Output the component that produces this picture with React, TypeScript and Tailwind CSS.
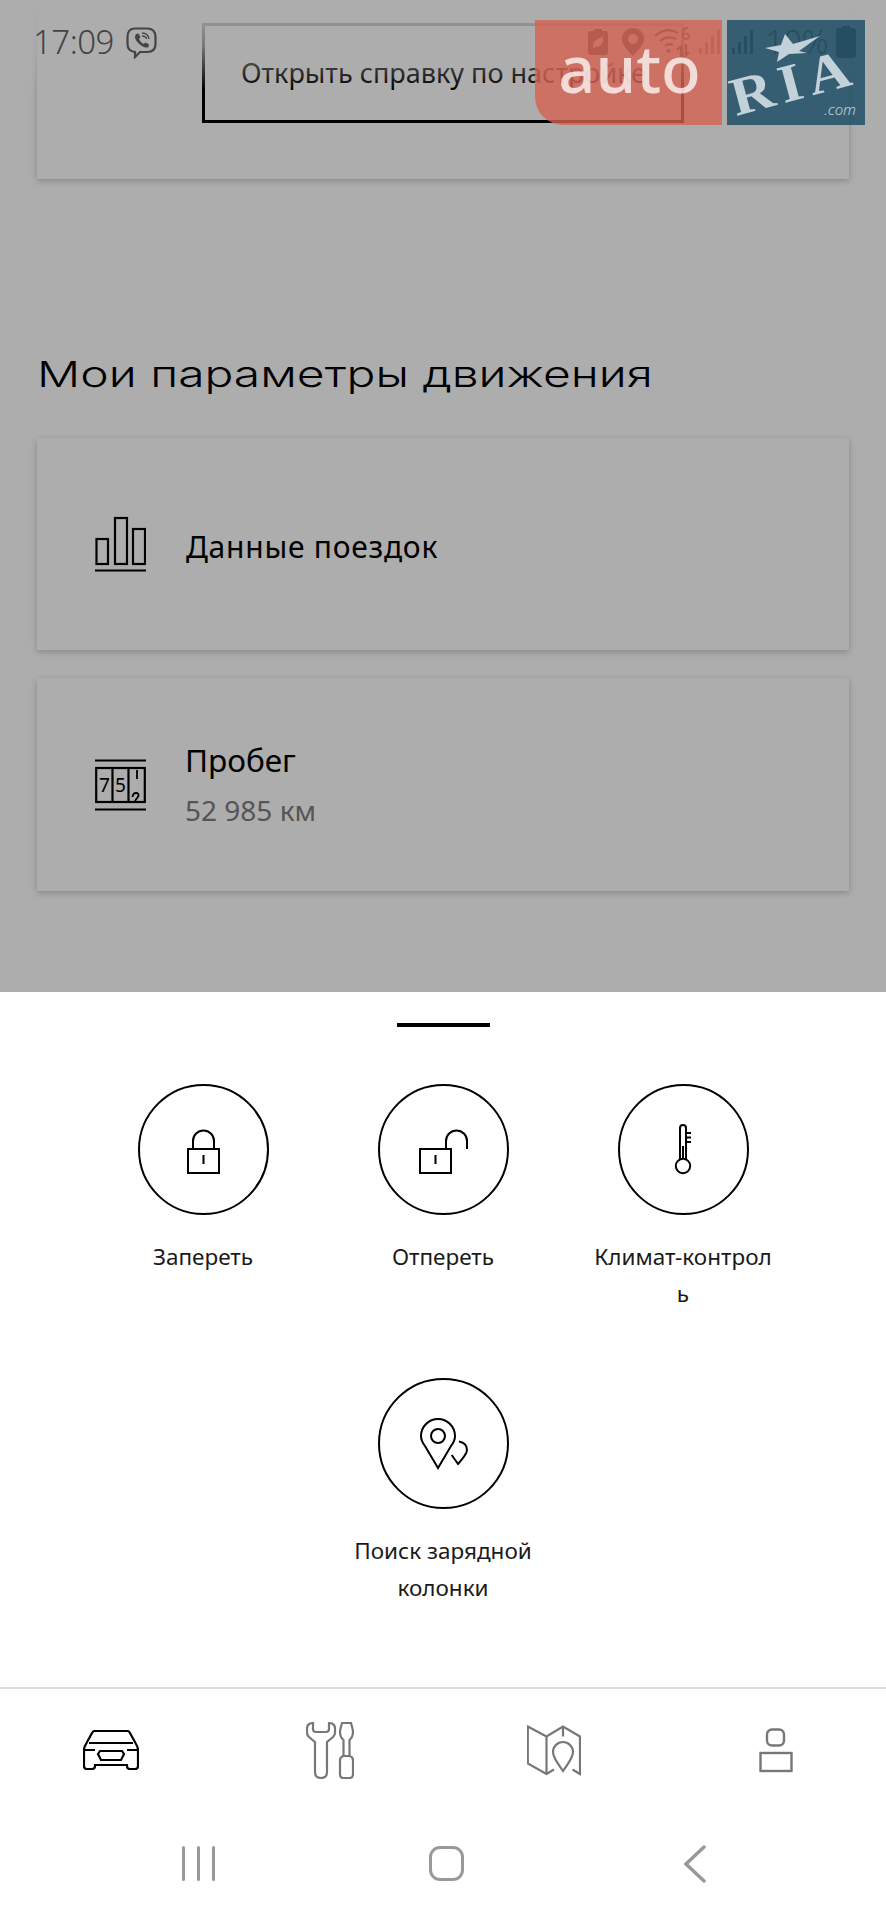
import React from "react";

const sans = "font-['Noto_Sans',sans-serif]";

function Action({ label, className = "", labelClass = "break-words", children }: { label: string; className?: string; labelClass?: string; children: React.ReactNode }) {
  return (
    <div className={`flex flex-col items-center ${className}`}>
      <div className="w-[131px] h-[131px] rounded-full border-[2.5px] border-black box-border flex items-center justify-center">
        <svg width="131" height="131" viewBox="0 0 131 131" fill="none" stroke="#000" strokeWidth="2" className="shrink-0">
          {children}
        </svg>
      </div>
      <div className={`mt-[23px] w-[182px] text-center text-[22.5px] leading-[37px] text-[#1a1a1a] ${labelClass}`}>{label}</div>
    </div>
  );
}

function Card({ className = "", children }: { className?: string; children: React.ReactNode }) {
  return <div className={`bg-[#adadad] shadow-[0_2px_6px_rgba(0,0,0,0.22)] ${className}`}>{children}</div>;
}

function Signal({ className = "" }: { className?: string }) {
  return (
    <svg width="22" height="24" viewBox="0 0 22 24" fill="#444444" className={className}>
      <rect x="0" y="18" width="3" height="6" />
      <rect x="6" y="12" width="3" height="12" />
      <rect x="12" y="6" width="3" height="18" />
      <rect x="18" y="0" width="3" height="24" />
    </svg>
  );
}

export default function App() {
  return (
    <div className={`relative w-[886px] h-[1920px] overflow-hidden bg-white ${sans}`}>
      {/* dimmed page */}
      <div className="h-[992px] bg-[#adadad] px-[37px]">
        <Card className="h-[179px] pt-[23px] flex justify-center items-start">
          <div className="w-[482px] h-[100px] border-[3px] border-black flex items-center pl-[36px] text-[27px] text-black whitespace-nowrap">
            Открыть справку по настройке
          </div>
        </Card>
        <div className="mt-[171px] h-[48px] leading-[48px] text-[36px] font-light font-['Inter',sans-serif] text-black whitespace-nowrap origin-left scale-x-[1.333]">
          Мои параметры движения
        </div>
        <Card className="mt-[40px] h-[212px] flex items-center pl-[58px] gap-[40px]">
          <svg width="51" height="56" viewBox="0 0 51 56" fill="none" stroke="#000" strokeWidth="2.2" className="shrink-0">
            <rect x="1.5" y="23" width="11.5" height="25" />
            <rect x="20" y="2" width="12" height="46" />
            <rect x="38" y="13" width="12" height="35" />
            <path d="M0 54.5H51" />
          </svg>
          <div className="text-[30px] tracking-[0.75px] text-black pt-[4px]">Данные поездок</div>
        </Card>
        <Card className="mt-[28px] h-[213px] flex items-center pl-[58px] gap-[39px]">
          <svg width="51" height="52" viewBox="0 0 51 52" fill="none" stroke="#000" strokeWidth="2.2" className="shrink-0">
            <path d="M0 1.5H51M0 50.5H51" />
            <rect x="1.2" y="9" width="48.6" height="34" />
            <path d="M17.5 9V43M33.5 9V43" />
            <text x="4" y="33" fontSize="19" fill="#000" stroke="none">7</text>
            <text x="20" y="33" fontSize="19" fill="#000" stroke="none">5</text>
            <path d="M42 11V20" strokeWidth="1.8" />
            <path d="M37.500 38Q38 34 41 34Q44 34 43.500 37L40 42" strokeWidth="1.8" />
          </svg>
          <div className="flex flex-col">
            <div className="text-[31.5px] leading-[44px] text-black -mt-[2px]">Пробег</div>
            <div className="mt-[8px] text-[28px] leading-[40px] text-[#555555]">52 985 км</div>
          </div>
        </Card>
      </div>

      {/* sheet */}
      <div className="h-[696px] bg-white">
        <div className="pt-[31px] flex justify-center">
          <div className="w-[93px] h-[4px] bg-black" />
        </div>
        <div className="mt-[57px] w-[720px] mx-auto grid grid-cols-3 gap-y-[66px]">
          <Action label="Запереть">
            <rect x="50" y="65" width="31" height="24" />
            <path d="M55 65V57a10.500 10.500 0 0 1 21 0V65" />
            <path d="M65.500 71V80" />
          </Action>
          <Action label="Отпереть">
            <rect x="42" y="65" width="31" height="24" />
            <path d="M68 65V57a10.500 10.500 0 0 1 21 0V65" />
            <path d="M57.500 71V80" />
          </Action>
          <Action label="Климат-контроль" labelClass="break-all">
            <path d="M62 75V44a3 3 0 0 1 6 0V75" />
            <circle cx="65" cy="82" r="7.2" />
            <path d="M68 49H73M68 53.500H73M68 58H73" />
            <path d="M65 62V75" strokeWidth="2" />
          </Action>
          <Action label="Поиск зарядной колонки" className="col-start-2">
            <path d="M60 90L47 68Q43 63 43 58a17 17 0 0 1 34 0Q77 63 73 68Z" />
            <circle cx="60" cy="58" r="7" />
            <path d="M81 63.500Q89 65 89 72Q89 76 80 86L73.700 77" />
          </Action>
        </div>
      </div>

      {/* bottom nav */}
      <div className="absolute left-0 right-0 top-[1687px] border-t-2 border-[#dddddd] bg-white">
        <div className="grid grid-cols-4 h-[126px] items-center pb-[4px]">
          <div className="flex justify-center">
            <svg width="56" height="40" viewBox="0 0 56 40" fill="none" stroke="#000" strokeWidth="2.2">
              <path d="M12 1H44Q46 1 47 3L53 14Q55 17 55 20V36Q55 39 52 39H47Q44 39 44 36V35H12V36Q12 39 9 39H4Q1 39 1 36V20Q1 17 3 14L9 3Q10 1 12 1Z" />
              <path d="M6 13H50M1 20H12M44 20H55" />
              <path d="M17 21H39L41 24L38 30H18L15 24Z" />
            </svg>
          </div>
          <div className="flex justify-center pr-[4px]">
            <svg width="48" height="57" viewBox="0 0 48 57" fill="none" stroke="#777777" strokeWidth="2.2">
              <path d="M9 20L3 15Q1 13 1 11V6Q1 3 4 1.500L7 1V7Q7 10 10 10H20Q23 10 23 7V1L26 1.500Q29 3 29 6V11Q29 13 27 15L21 20V50Q21 56 15 56Q9 56 9 50Z" />
              <path d="M36 1H45Q47 8 47 10Q47 15 43.500 18V34H37.500V18Q34 15 34 10Q34 8 36 1Z" />
              <path d="M37.500 34H43.500Q47 35 47 38V52Q47 56 43.500 56H37.500Q34 56 34 52V38Q34 35 37.500 34Z" />
            </svg>
          </div>
          <div className="flex justify-center">
            <svg width="54" height="51" viewBox="0 0 54 51" fill="none" stroke="#777777" strokeWidth="2.2">
              <path d="M27 44.500L19.500 49L0.800 38.500V1.500L19.500 11.500L36 1.500L53 11.500V49L45.500 44.500" />
              <path d="M19.500 11.500V49M36 1.500V11.500" />
              <path d="M36 46C32 40 26 33 26 27a10 10 0 0 1 20 0C46 33 40 40 36 46Z" />
            </svg>
          </div>
          <div className="flex justify-center pl-[2px]">
            <svg width="34" height="45" viewBox="0 0 34 45" fill="none" stroke="#777777" strokeWidth="2.4">
              <rect x="8" y="1.500" width="17" height="16" rx="5" />
              <rect x="1.500" y="25" width="31" height="18" />
            </svg>
          </div>
        </div>
        {/* system nav */}
        <div className="h-[105px] flex items-start pt-[31px] pl-[182px]">
          <div className="flex gap-[12px]">
            <div className="w-[3px] h-[35px] bg-[#999999] rounded-full" />
            <div className="w-[3px] h-[35px] bg-[#999999] rounded-full" />
            <div className="w-[3px] h-[35px] bg-[#999999] rounded-full" />
          </div>
          <div className="ml-[214px] w-[35px] h-[35px] rounded-[11px] border-[3.500px] border-[#999999]" />
          <svg width="22" height="38" viewBox="0 0 22 38" fill="none" stroke="#999999" strokeWidth="3.500" strokeLinecap="round" className="ml-[220px] -mt-[1px]">
            <path d="M20 2L2 19L20 36" />
          </svg>
        </div>
      </div>

      {/* status-bar scrim over the page */}
      <div className="absolute left-0 right-0 top-0 h-[90px] bg-gradient-to-b from-[#adadad] via-[#adadad]/70 to-transparent" />

      {/* status bar */}
      <div className="absolute left-[33px] top-[22px] right-[30px] h-[40px] flex items-center text-[#444444]">
        <span className="text-[33px] leading-[40px] font-light tracking-[-0.5px]">17:09</span>
        <svg width="31" height="32" viewBox="0 0 31 32" fill="none" stroke="#444444" strokeWidth="2.200" className="ml-[12px] mt-[2px]">
          <path d="M9 1.500H21Q29.500 1.500 29.500 10V17Q29.500 25 21 25H14L9 30V25Q1.500 24 1.500 17V10Q1.500 1.500 9 1.500Z" />
          <path d="M10 7L12.500 6.500L14.500 10L13 12Q14 15 17.500 17L19.500 15.500L23 17.500L22.500 20Q20 21.500 16 19Q10.500 15.500 9 11Q8.800 9 10 7Z" fill="#444444" stroke="none" />
          <path d="M16 6Q22 6 23 12M16 9Q20 9 20.500 12" strokeWidth="1.300" />
        </svg>
        <div className="ml-auto flex items-center">
          <svg width="20" height="26" viewBox="0 0 20 26" className="mr-[13px]" fill="#444444">
            <path d="M6 0H14V2H17Q20 2 20 5V23Q20 26 17 26H3Q0 26 0 23V5Q0 2 3 2H6Z" />
            <path d="M5 19Q4 10 15 8Q16 17 8 18Z" fill="#adadad" />
          </svg>
          <svg width="24" height="28" viewBox="0 0 24 28" className="mr-[9px]">
            <path fillRule="evenodd" fill="#444444" d="M12 0a11 11 0 0 1 11 11C23 18 12 28 12 28S1 18 1 11A11 11 0 0 1 12 0ZM12 6a5 5 0 1 0 0 10a5 5 0 0 0 0-10Z" />
          </svg>
          <svg width="36" height="32" viewBox="0 0 36 32" fill="none" stroke="#444444" strokeWidth="2.200" className="mr-[9px]">
            <path d="M1 10Q12 0 24 7M6 15Q13 9 22 13M11 20Q14 17 19 19" />
            <circle cx="14.500" cy="25" r="2" fill="#444444" stroke="none" />
            <path d="M27 20V31M23 24L27 20M32 18V29L35 26" />
            <path d="M34 2Q29 1 29 9Q29 13 32 13Q35 13 35 10Q35 7 29 8" strokeWidth="1.600" />
          </svg>
          <Signal className="mr-[11px] opacity-60" />
          <Signal className="mr-[11px]" />
          <span className="text-[33px] leading-[40px] font-light tracking-[-0.5px]">10%</span>
          <svg width="20" height="32" viewBox="0 0 20 32" fill="#444444" className="ml-[8px]">
            <path d="M6 0H14V2H17Q20 2 20 5V29Q20 32 17 32H3Q0 32 0 29V5Q0 2 3 2H6Z" />
          </svg>
        </div>
      </div>

      {/* watermark */}
      <div className="absolute left-[535px] top-[20px] w-[187px] h-[105px] rounded-bl-[28px] bg-[#d46152]/80 flex items-center justify-center">
        <span className="text-[65px] leading-[72px] font-medium text-white/75 -mt-[10px] ml-[2px]">auto</span>
      </div>
      <div className="absolute left-[727px] top-[20px] w-[138px] h-[105px] overflow-hidden bg-[#215067]/85">
        <svg width="138" height="105" viewBox="0 0 138 105" className="absolute left-0 top-0" fill="#c3d2da">
          <polygon points="38,28 54,25 58,14 66,24 93,16 72,31 80,33 62,34 50,42 52,32" />
        </svg>
        <div className="absolute left-[8px] top-[34px] font-['Liberation_Serif',serif] font-bold text-[54px] leading-[56px] tracking-[6px] text-[#c3d2da] -rotate-[15deg] scale-x-[1.1]">
          RIA
        </div>
        <div className="absolute right-[9px] bottom-[6px] text-[15px] leading-[20px] italic font-light text-[#c3d2da]">.com</div>
      </div>
    </div>
  );
}
